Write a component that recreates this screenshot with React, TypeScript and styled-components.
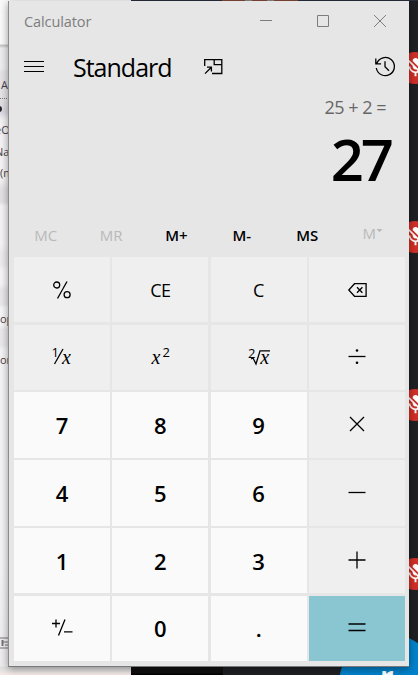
import React from "react";
import styled, { createGlobalStyle } from "styled-components";
import { MdMicOff } from "react-icons/md";

const GlobalStyle = createGlobalStyle`
  * { box-sizing: border-box; }
  body { margin: 0; overflow: hidden; font-family: "Open Sans", "Noto Sans", sans-serif; }
`;

const Desktop = styled.div`
  position: relative;
  width: 418px;
  height: 675px;
  overflow: hidden;
  background: #1e2024;
`;

/* Whatever is open behind the calculator window */
const DocumentBehind = styled.div`
  position: absolute;
  left: 0;
  top: 0;
  width: 131px;
  height: 675px;
  background: linear-gradient(
    #fbfafb 0 44px, #c9c7c9 45px 46px, #eeedef 48px 68px, #e6e4e8 72px 98px,
    #dcd9e2 112px, #f5f3f5 120px 180px, #e4e1e4 190px 202px, #f6f4f6 206px 245px,
    #eeecee 252px 265px, #f7f5f7 270px 283px, #eae8ea 290px 304px, #f7f6f8 308px 325px,
    #ebe9eb 330px 345px, #f5f4f6 350px 560px, #eeecee 666px, #e2dfdf 667px, #eae6e6 672px, #f7e9e5 674px
  );
`;

const Scrap = styled.span<{ $x: number; $y: number }>`
  position: absolute;
  left: ${(p) => p.$x}px;
  top: ${(p) => p.$y}px;
  font-size: 11px;
  line-height: 14px;
  color: #454249;
  white-space: nowrap;
`;

const ScrapIcon = styled.svg`
  position: absolute;
  left: 0;
  top: 635px;
`;

const DottedRule = styled.div`
  position: absolute;
  top: 98px;
  width: 9px;
  border-top: 1px dotted #777;
`;

const Bullet = styled.div`
  position: absolute;
  left: -4px;
  top: 106px;
  width: 6px;
  height: 6px;
  border-radius: 3px;
  background: #26232c;
`;

const DarkPanel = styled.div`
  position: absolute;
  left: 131px;
  top: 0;
  width: 92px;
  height: 675px;
  background: linear-gradient(#2a2f3c 0 2px, #101010 2px 673px, #020202 674px);
`;

const Thumbnail = styled.div`
  position: absolute;
  left: 222px;
  top: 0;
  width: 196px;
  height: 1px;
  background: linear-gradient(90deg, #834838 0 23px, #8c8888 23px 30px, #834838 30px 45px, #8c8888 45px 52px, #834838 52px 76px, #2a2f3c 76px);
`;

const Muted = styled.div<{ $y: number }>`
  position: absolute;
  left: 399px;
  top: ${(p) => p.$y}px;
  width: 32px;
  height: 32px;
  border-radius: 50%;
  background: #d13028;
  color: #fff;
  display: grid;
  place-items: center;
  svg { width: 23px; height: 23px; transform: translateY(-1px); }
`;

const Avatar = styled.div`
  position: absolute;
  left: 339px;
  top: 634px;
  width: 100px;
  height: 100px;
  border-radius: 50%;
  background: #0082cb;
  color: #fff;
  font: 700 30px/30px "Open Sans", sans-serif;
  padding: 28px 0 0 41px;
`;

const Window = styled.main`
  position: absolute;
  left: 8px;
  top: 1px;
  width: 401px;
  height: 666px;
  display: flex;
  flex-direction: column;
  padding: 0 4px 5px 5px;
  background: #e6e6e6;
  border-left: 1px solid #8b8b8b;
  border-bottom: 1px solid #777a7a;
  box-shadow: 0 2px 8px rgba(0, 0, 0, 0.4);
  color: #000;
`;

const TitleBar = styled.header`
  display: flex;
  align-items: center;
  justify-content: space-between;
  height: 40px;
  padding: 0 18px 0 10px;
  color: #7d7d7d;
`;

const Caption = styled.div`
  display: flex;
  gap: 44px;
`;

const Header = styled.div`
  display: flex;
  align-items: center;
  height: 52px;
  padding: 0 9px 0 10px;
`;

const Mode = styled.h1`
  margin: 0 0 0 29px;
  padding-top: 1px;
  width: 131px;
  font-size: 25px;
  line-height: 1;
  font-weight: 400;
`;

const Spacer = styled.div`
  flex: 1;
`;

const Label = styled.span<{ $size: number; $weight?: number; $track?: number; $dy?: number }>`
  display: inline-block;
  font-size: ${(p) => p.$size}px;
  font-weight: ${(p) => p.$weight ?? 400};
  letter-spacing: ${(p) => p.$track ?? 0}px;
  line-height: 1;
  white-space: nowrap;
  padding-top: ${(p) => p.$dy ?? 0}px;
`;

const Display = styled.section`
  height: 124px;
  display: flex;
  flex-direction: column;
  align-items: flex-end;
`;

const Expression = styled.div`
  height: 36px;
  padding: 4px 19px 0 0;
  color: #666;
`;

const Result = styled.div`
  padding: 1px 14px 0 0;
`;

const Memory = styled.div`
  display: grid;
  grid-template-columns: repeat(6, 65.4px);
  height: 40px;
  margin-left: -1px;
`;

const MemoryKey = styled.button<{ $off?: boolean }>`
  display: flex;
  align-items: center;
  justify-content: center;
  border: 0;
  padding: 0 0 4px;
  background: none;
  font-family: inherit;
  color: ${(p) => (p.$off ? "#b9b9b9" : "#000")};
`;

const MemoryList = styled(MemoryKey)`
  padding-bottom: 7px;
`;

const Caret = styled.svg`
  align-self: flex-start;
  margin-top: 12px;
`;

const Keypad = styled.div`
  flex: 1;
  display: grid;
  grid-template-columns: repeat(4, 1fr);
  grid-template-rows: repeat(6, 1fr);
  gap: 2.4px;
`;

const fills = { fn: "#efefef", digit: "#fafafa", equals: "#8ac5d2" };

const Key = styled.button<{ $kind: keyof typeof fills }>`
  display: flex;
  align-items: center;
  justify-content: center;
  min-width: 0;
  min-height: 0;
  padding: 0;
  border: 0;
  font-family: inherit;
  color: #000;
  background: ${(p) => fills[p.$kind]};
`;

const Glyph = styled.svg<{ $stroke?: number }>`
  display: block;
  fill: none;
  stroke: currentColor;
  stroke-width: ${(p) => p.$stroke ?? 1.3};
  overflow: visible;
  text { fill: currentColor; stroke: none; }
`;

const Italic = styled.text`
  font: italic 20px "Liberation Serif", serif;
`;

const Small = styled.text`
  font: 13px "Open Sans", sans-serif;
`;

const Icon = ({ d, dots }: { d: string; dots?: boolean }) => (
  <Glyph width="20" height="20" viewBox="0 0 20 20">
    <path d={d} />
    {dots && (
      <g fill="currentColor" stroke="none">
        <circle cx="10" cy="3.5" r="1.3" />
        <circle cx="10" cy="15.7" r="1.3" />
      </g>
    )}
  </Glyph>
);

const Digit = ({ n }: { n: string }) => (
  <Key $kind="digit">
    <Label $size={22} $weight={600}>{n}</Label>
  </Key>
);

export default function App() {
  return (
    <Desktop>
      <GlobalStyle />
      <DocumentBehind>
        <Scrap $x={1} $y={78}>Ac</Scrap>
        <DottedRule />
        <Bullet />
        <Scrap $x={-5} $y={123}>eO</Scrap>
        <Scrap $x={-5} $y={145}>Na</Scrap>
        <Scrap $x={0} $y={166}>(m</Scrap>
        <Scrap $x={0} $y={312}>op</Scrap>
        <Scrap $x={0} $y={353}>on</Scrap>
        <ScrapIcon width="9" height="16" viewBox="0 0 9 16" fill="none" stroke="#77747a">
          <path d="M0 3h9M0 13h9M3 7h6M5 10h4" />
          <path d="M2.5 5v6" strokeWidth="2" />
        </ScrapIcon>
      </DocumentBehind>
      <DarkPanel />
      <Thumbnail />
      {[52, 221, 389, 558].map((y) => (
        <Muted key={y} $y={y}><MdMicOff /></Muted>
      ))}
      <Avatar>r</Avatar>

      <Window>
        <TitleBar>
          <Label $size={14.5} $track={-0.1} $dy={3}>Calculator</Label>
          <Caption>
            <Glyph width="13" height="13" $stroke={1}><path d="M0 5.5h12" /></Glyph>
            <Glyph width="13" height="13" $stroke={1}><path d="M.5 .5h11v11H.5z" /></Glyph>
            <Glyph width="13" height="13" $stroke={1}><path d="M0 0l12 12M12 0l-12 12" /></Glyph>
          </Caption>
        </TitleBar>
        <Header>
          <Glyph width="20" height="12" $stroke={1}><path d="M0 .5h20M0 5.5h20M0 10.5h20" /></Glyph>
          <Mode><Label $size={25} $track={-1}>Standard</Label></Mode>
          <Glyph width="19" height="17"><path d="M.7 7V.7h17.1v13.8H8M10.2 .7v5h7.6M1 14.6l6.4-6.4M3 8.2h4.4v4.4" /></Glyph>
          <Spacer />
          <Glyph width="21" height="23"><path d="M1.7 7.5A9.1 9.1 0 1 1 1.3 12M.8 2.5v5.3h5.3M10 5.2v5.6l4 4" /></Glyph>
        </Header>
        <Display>
          <Expression><Label $size={18} $track={-0.5}>25 + 2 =</Label></Expression>
          <Result><Label $size={58} $weight={600} $track={-3}>27</Label></Result>
        </Display>
        <Memory>
          <MemoryKey $off><Label $size={15}>MC</Label></MemoryKey>
          <MemoryKey $off><Label $size={15}>MR</Label></MemoryKey>
          <MemoryKey><Label $size={15} $weight={600}>M+</Label></MemoryKey>
          <MemoryKey><Label $size={15} $weight={600}>M-</Label></MemoryKey>
          <MemoryKey><Label $size={15} $weight={600}>MS</Label></MemoryKey>
          <MemoryList $off>
            <Label $size={15}>M</Label>
            <Caret width="7" height="4"><path d="M.5 0h6L3.5 3.2z" fill="currentColor" /></Caret>
          </MemoryList>
        </Memory>
        <Keypad>
          <Key $kind="fn">
            <Glyph width="18" height="18">
              <circle cx="3.7" cy="4" r="3" /><circle cx="14.1" cy="13.7" r="3" /><path d="M14 .5L4.5 17.5" />
            </Glyph>
          </Key>
          <Key $kind="fn"><Label $size={18} $track={-0.5} $dy={1}>CE</Label></Key>
          <Key $kind="fn"><Label $size={18} $dy={1}>C</Label></Key>
          <Key $kind="fn">
            <Glyph width="19" height="14"><path d="M6.5 .7h11.6v12.6H6.5L.8 7zM9 4.2l5.4 5.5M14.4 4.2L9 9.7" /></Glyph>
          </Key>
          <Key $kind="fn">
            <Glyph width="20" height="18">
              <Small x="-.5" y="9">1</Small><path d="M11 1L2.5 16" /><Italic x="10" y="16">x</Italic>
            </Glyph>
          </Key>
          <Key $kind="fn">
            <Glyph width="20" height="18"><Italic x="1.5" y="16">x</Italic><Small x="12.5" y="9">2</Small></Glyph>
          </Key>
          <Key $kind="fn">
            <Glyph width="20" height="18">
              <Small x="-1" y="10">2</Small><path d="M2 11l2-1 3 6L11 2.9h10" /><Italic x="11.3" y="16">x</Italic>
            </Glyph>
          </Key>
          <Key $kind="fn"><Icon d="M1.5 9.5h17" dots /></Key>
          <Digit n="7" /><Digit n="8" /><Digit n="9" />
          <Key $kind="fn"><Icon d="M3 2l14 14M17 2L3 16" /></Key>
          <Digit n="4" /><Digit n="5" /><Digit n="6" />
          <Key $kind="fn"><Icon d="M1.5 9.5h17" /></Key>
          <Digit n="1" /><Digit n="2" /><Digit n="3" />
          <Key $kind="fn"><Icon d="M1.5 9h17M10 .5v17" /></Key>
          <Key $kind="digit">
            <Glyph width="22" height="18"><path d="M1 4.5h8M5 .5v8M14 .5L7.5 16.5M13 12.8h8.5" /></Glyph>
          </Key>
          <Digit n="0" /><Digit n="." />
          <Key $kind="equals"><Icon d="M1.5 6h17M1.5 12.5h17" /></Key>
        </Keypad>
      </Window>
    </Desktop>
  );
}
